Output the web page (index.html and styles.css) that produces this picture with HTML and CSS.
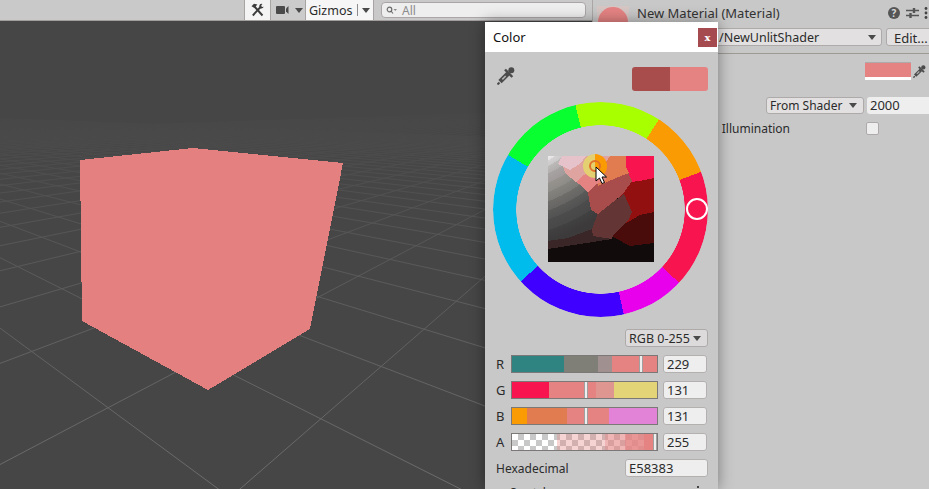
FILE: index.html
```html
<!DOCTYPE html>
<html lang="en">
<head>
    <meta charset="UTF-8">
    <meta name="viewport" content="width=device-width, initial-scale=1.0">
    <title>New Material - Color</title>
    <link rel="stylesheet" href="styles.css">
</head>
<body>
    <div class="editor">
        <!-- Scene view -->
        <section class="scene">
            <div class="toolbar">
                <button class="tool-btn tools-btn">
                    <svg width="13" height="14" viewBox="0 0 13 14">
                        <path d="M3 3 L11.500 12.500" stroke="#3c3c3c" stroke-width="1.900" fill="none"/>
                        <path d="M10 3.500 L1.800 12.500" stroke="#3c3c3c" stroke-width="1.900" fill="none"/>
                        <path d="M.5 3.200 L3 .8 L6.300 1.600 L3.600 5 Z" fill="#3c3c3c"/>
                        <path d="M9 1.200 A3 3 0 0 0 9 5.200 A3 3 0 0 0 12.800 3.800 L10.800 4 L10.200 2.600 L11.400 1 A3 3 0 0 0 9 1.200 Z" fill="#3c3c3c"/>
                    </svg>
                </button>
                <button class="tool-btn camera-btn">
                    <svg width="13" height="10" viewBox="0 0 13 10">
                        <rect x="0" y="1" width="9" height="8" rx="1" fill="#4a4a4a"/>
                        <path d="M10 3.500 L12.500 1 V9 L10 6.500 Z" fill="#4a4a4a"/>
                    </svg>
                    <span class="arrow"></span>
                </button>
                <button class="tool-btn gizmos-btn">
                    <span>Gizmos</span>
                    <span class="gizmos-sep"></span>
                    <span class="arrow"></span>
                </button>
                <div class="search">
                    <svg width="11" height="9" viewBox="0 0 11 9">
                        <circle cx="3.500" cy="3.500" r="2.300" stroke="#6a6a6a" stroke-width="1.200" fill="none"/>
                        <path d="M5 5 L7 7.500" stroke="#6a6a6a" stroke-width="1.200"/>
                        <path d="M7.500 3 H11 L9.250 5 Z" fill="#8a8a8a"/>
                    </svg>
                    <span>All</span>
                </div>
            </div>
            <svg id="sceneView" class="scene-canvas" viewBox="0 21 592 468">
                <defs>
                    <linearGradient id="gridFade" gradientUnits="userSpaceOnUse" x1="0" y1="104" x2="0" y2="489">
                        <stop offset="0" stop-color="#464646"/>
                        <stop offset="0.1" stop-color="#4a4a4a"/>
                        <stop offset="0.3" stop-color="#545454"/>
                        <stop offset="0.6" stop-color="#606060"/>
                        <stop offset="1" stop-color="#6c6c6c"/>
                    </linearGradient>
                </defs>
                <g id="gridLines" stroke="url(#gridFade)" stroke-width="1"></g>
                <polygon class="cube" points="80,160 193,148 343,163 310,329 208,390 82,321"/>
            </svg>
        </section>

        <!-- Inspector -->
        <section class="inspector">
            <div class="material-head">
                <div class="preview"><div class="preview-ball"></div></div>
                <span class="material-title">New Material (Material)</span>
                <div class="head-icons">
                    <span class="help-icon">?</span>
                    <svg width="13" height="12" viewBox="0 0 13 12">
                        <path d="M0 3.500 H13 M0 8.500 H13" stroke="#555" stroke-width="1.300"/>
                        <path d="M8 1 V6 M4.500 6 V11" stroke="#555" stroke-width="2.400"/>
                    </svg>
                    <svg width="4" height="12" viewBox="0 0 4 12">
                        <circle cx="2" cy="1.500" r="1.400" fill="#444"/>
                        <circle cx="2" cy="6" r="1.400" fill="#444"/>
                        <circle cx="2" cy="10.500" r="1.400" fill="#444"/>
                    </svg>
                </div>
            </div>
            <div class="shader-row">
                <div class="shader-select">
                    <span>/NewUnlitShader</span>
                    <span class="arrow"></span>
                </div>
                <button class="edit-btn">Edit...</button>
            </div>
            <div class="props">
                <div class="color-field">
                    <div class="color-field-swatch"></div>
                    <svg class="dropper-small" viewBox="0 0 18 18">
                        <use href="#dropper"/>
                    </svg>
                </div>
                <div class="queue-row">
                    <div class="queue-select">
                        <span>From Shader</span>
                        <span class="arrow"></span>
                    </div>
                    <div class="queue-input">2000</div>
                </div>
                <div class="gi-row">
                    <span class="gi-label">al Illumination</span>
                    <span class="checkbox"></span>
                </div>
            </div>
        </section>
    </div>

    <!-- Color picker window -->
    <aside class="color-picker">
        <header class="picker-head">
            <span>Color</span>
            <button class="close-btn">x</button>
        </header>
        <div class="picker-body">
            <div class="picker-top">
                <svg class="dropper" width="18" height="18" viewBox="0 0 18 18">
                    <g id="dropper">
                        <circle cx="14.300" cy="3.300" r="3" fill="#4b4b4b"/>
                        <path d="M8 2.500 L15.300 10" stroke="#4b4b4b" stroke-width="2.500"/>
                        <path d="M11 6.700 L3 14.700" stroke="#4b4b4b" stroke-width="4.600"/>
                        <path d="M8.700 9 L5.300 12.400" stroke="#b4b4b4" stroke-width="1.500"/>
                        <path d="M2.500 15.500 L.5 17.500" stroke="#4b4b4b" stroke-width="2"/>
                    </g>
                </svg>
                <div class="compare">
                    <div class="compare-old"></div>
                    <div class="compare-new"></div>
                </div>
            </div>

            <div class="wheel">
                <div class="wheel-ring"></div>
                <div class="wheel-handle"></div>
                <svg class="sv-square" width="106" height="106" viewBox="0 0 106 106" shape-rendering="crispEdges">
                    <defs>
                        <radialGradient id="grays" gradientUnits="userSpaceOnUse" cx="-46" cy="-79" r="170">
                            <stop offset="0.53" stop-color="#f2f0f0"/>
                            <stop offset="0.56" stop-color="#e4e2e2"/>
                            <stop offset="0.56" stop-color="#d4d2d2"/>
                            <stop offset="0.59" stop-color="#cac8c8"/>
                            <stop offset="0.59" stop-color="#bcb9b9"/>
                            <stop offset="0.63" stop-color="#b2aeae"/>
                            <stop offset="0.63" stop-color="#a8a3a3"/>
                            <stop offset="0.68" stop-color="#a09b9a"/>
                            <stop offset="0.68" stop-color="#96938f"/>
                            <stop offset="0.73" stop-color="#8e8c86"/>
                            <stop offset="0.73" stop-color="#85837e"/>
                            <stop offset="0.78" stop-color="#7c7a76"/>
                            <stop offset="0.78" stop-color="#6f6d6a"/>
                            <stop offset="0.83" stop-color="#666563"/>
                            <stop offset="0.83" stop-color="#5a5a59"/>
                            <stop offset="0.88" stop-color="#525252"/>
                            <stop offset="0.88" stop-color="#4c4c4c"/>
                            <stop offset="0.94" stop-color="#484848"/>
                            <stop offset="0.94" stop-color="#424141"/>
                            <stop offset="1" stop-color="#3c3a3a"/>
                        </radialGradient>
                    </defs>
                    <rect width="106" height="106" fill="#110b0c"/>
                    <polygon fill="#4a0b0b" points="106,54 92,57 78,62 62,78 67,82 82,90 106,87"/>
                    <polygon fill="#92100f" points="70,26 92,25 106,22 106,56 92,59 80,66 70,70"/>
                    <polygon fill="#f8144f" points="78,0 106,0 106,22 92,25 82,26 78,11"/>
                    <polygon fill="#3a2527" points="0,84 0,93 64,83 66,72 44,70 20,82"/>
                    <polygon fill="url(#grays)" points="0,0 40,0 54,26 40,37 43,54 50,57 44,73 20,82 0,85"/>
                    <polygon fill="#643535" points="44,73 50,57 76,38 84,56 80,65 65,79 64,83 45,80"/>
                    <polygon fill="#a94c4c" points="40,37 43,54 50,58 75,38 84,25 79,14 47,29"/>
                    <polygon fill="#e07c50" points="62,0 78,0 78,11 81,17 68,22 50,30 50,10"/>
                    <polygon fill="#dfa3a0" points="12,4 40,0 62,0 54,12 42,22 28,26 18,18"/>
                    <polygon fill="#e6c2ca" points="14,0 38,0 32,8 22,14 10,8"/>
                    <polygon fill="#e58383" points="28,26 44,12 56,16 58,24 47,29 40,37 34,30"/>
                </svg>
                <div class="sv-handle"></div>
                <div class="sv-handle-ring"></div>
                <svg class="cursor" width="13" height="19" viewBox="0 0 13 19">
                    <path d="M1 1 V15 L4.500 12 L7 17.500 L9.500 16.500 L7 11 L11.500 11 Z" fill="#fff" stroke="#000" stroke-width="1"/>
                </svg>
            </div>

            <div class="mode-row">
                <div class="mode-select">
                    <span>RGB 0-255</span>
                    <span class="arrow"></span>
                </div>
            </div>

            <div class="channel">
                <label>R</label>
                <div class="track track-r"><span class="thumb" style="left: 127px"></span></div>
                <div class="num-input">229</div>
            </div>
            <div class="channel">
                <label>G</label>
                <div class="track track-g"><span class="thumb" style="left: 72px"></span></div>
                <div class="num-input">131</div>
            </div>
            <div class="channel">
                <label>B</label>
                <div class="track track-b"><span class="thumb" style="left: 72px"></span></div>
                <div class="num-input">131</div>
            </div>
            <div class="channel">
                <label>A</label>
                <div class="track track-a"><span class="thumb" style="left: 141px"></span></div>
                <div class="num-input">255</div>
            </div>

            <div class="hex-row">
                <label>Hexadecimal</label>
                <div class="hex-input">E58383</div>
            </div>
            <div class="swatches-row">
                <span>Swatches</span>
                <span class="swatches-menu"></span>
            </div>
        </div>
    </aside>

    <script src="grid.js"></script>
</body>
</html>
```

FILE: styles.css
```css
* {
    box-sizing: border-box;
}
html, body {
    margin: 0;
    height: 100%;
    overflow: hidden;
}
body {
    font-family: "Noto Sans", "Open Sans", Arial, sans-serif;
    font-size: 12px;
    color: #2b2b2b;
    background-color: #c8c8c8;
}
button {
    font: inherit;
    color: inherit;
    margin: 0;
    padding: 0;
    border: none;
}
.editor {
    display: flex;
    height: 489px;
}
.arrow {
    display: inline-block;
    flex: none;
    width: 0;
    height: 0;
    border-left: 4px solid transparent;
    border-right: 4px solid transparent;
    border-top: 5px solid #4a4a4a;
}

/* Scene view */
.scene {
    flex: 0 0 592px;
    display: flex;
    flex-direction: column;
}
.toolbar {
    flex: 0 0 21px;
    display: flex;
    align-items: stretch;
    padding-left: 244px;
    background: #c9c9c9;
    border-bottom: 1px solid #a39d9d;
}
.tool-btn {
    display: flex;
    align-items: center;
    font-size: 12.500px;
    border-left: 1px solid #a8a4a4;
}
.tools-btn {
    width: 26px;
    justify-content: center;
    background: #f4f4f4;
}
.camera-btn {
    width: 35px;
    gap: 6px;
    padding-left: 5px;
    background: #cbcbcb;
}
.gizmos-btn {
    width: 69px;
    padding-left: 3px;
    background: #f6f6f6;
    border-right: 1px solid #a8a4a4;
}
.gizmos-sep {
    width: 1px;
    height: 12px;
    margin: 0 4px 0 5px;
    background: #8c8c8c;
}
.search {
    width: 205px;
    height: 16px;
    margin: 2px 0 0 7px;
    padding-left: 4px;
    display: flex;
    align-items: center;
    gap: 5px;
    color: #8c8c8c;
    background: #eeeeee;
    border: 1px solid #aaa6a6;
    border-radius: 4px;
}
.scene-canvas {
    display: block;
    flex: 1;
    width: 592px;
    background: #464646;
}
.cube {
    fill: #e48180;
    shape-rendering: crispEdges;
}

/* Inspector */
.inspector {
    flex: 1;
    min-width: 0;
    overflow: hidden;
    background: #c8c8c8;
    border-left: 1px solid #aaa6a6;
    padding-left: 4px;
}
.material-head {
    height: 28px;
    display: flex;
    align-items: flex-start;
    padding-top: 5px;
}
.preview {
    width: 32px;
    height: 19px;
    margin-top: 1px;
    overflow: hidden;
    background: #d6c6c4;
}
.preview-ball {
    width: 30px;
    height: 30px;
    margin: 1px auto 0;
    border-radius: 50%;
    background: #e58383;
}
.material-title {
    margin-left: 8px;
    font-size: 13px;
    line-height: 17px;
    color: #333333;
}
.head-icons {
    margin-left: auto;
    width: 41px;
    padding-top: 2px;
    display: flex;
    align-items: center;
    justify-content: space-between;
    padding-right: 1px;
}
.help-icon {
    width: 12px;
    height: 12px;
    border-radius: 50%;
    background: #555;
    color: #d8d8d8;
    font-size: 10px;
    font-weight: 700;
    line-height: 12px;
    text-align: center;
}
.shader-row {
    display: flex;
    gap: 4px;
    height: 18px;
    margin-left: -10px;
}
.shader-select {
    flex: 1;
    display: flex;
    align-items: center;
    justify-content: space-between;
    padding: 0 5px 0 131px;
    font-size: 12.500px;
    white-space: nowrap;
    background: #e2e0e0;
    border: 1px solid #aeaaaa;
    border-radius: 3px;
}
.edit-btn {
    width: 48px;
    margin-right: -5px;
    font-size: 13px;
    text-align: left;
    padding-left: 7px;
    background: #e2e0e0;
    border: 1px solid #aeaaaa;
    border-radius: 3px;
}
.props {
    margin-top: 7px;
    padding-top: 8px;
    border-top: 1px solid #9d9a94;
}
.color-field {
    display: flex;
    align-items: center;
    height: 18px;
    margin-left: 268px;
}
.color-field-swatch {
    width: 46px;
    height: 18px;
    background: #e58383;
    border-bottom: 3px solid #ffffff;
    border-top: 1px solid #aeaaaa;
}
.dropper-small {
    width: 13px;
    height: 13px;
    margin-left: 2px;
}
.queue-row {
    display: flex;
    gap: 3px;
    margin: 17px 0 0 169px;
    height: 17px;
}
.queue-select {
    flex: none;
    width: 98px;
    display: flex;
    align-items: center;
    justify-content: space-between;
    padding: 0 6px 0 3px;
    font-size: 12px;
    white-space: nowrap;
    background: #e2e0e0;
    border: 1px solid #aeaaaa;
    border-radius: 3px;
}
.queue-input {
    width: 70px;
    flex: none;
    padding-left: 3px;
    font-size: 13px;
    line-height: 17px;
    background: #eeeeee;
    border-radius: 3px;
}
.gi-row {
    display: flex;
    align-items: center;
    justify-content: flex-end;
    width: 282px;
    height: 14px;
    margin-top: 7px;
}
.gi-label {
    font-size: 12px;
    white-space: nowrap;
    margin-right: 76px;
}
.checkbox {
    flex: none;
    width: 13px;
    height: 13px;
    background: #eeeeee;
    border: 1px solid #aeaaaa;
    border-radius: 2px;
}

/* Color picker */
.color-picker {
    position: absolute;
    left: 485px;
    top: 22px;
    width: 233px;
    height: 467px;
    overflow: hidden;
    background: #c8c8c8;
    box-shadow: 0 0 14px rgba(0, 0, 0, 0.4);
    clip-path: inset(-20px -20px 0 -20px);
}
.picker-head {
    height: 30px;
    display: flex;
    align-items: center;
    justify-content: space-between;
    padding: 0 1px 0 8px;
    font-size: 13px;
    color: #111111;
    background: #ffffff;
}
.close-btn {
    width: 19px;
    height: 19px;
    font-family: "DejaVu Serif", serif;
    font-size: 10px;
    font-weight: 700;
    color: #ffffff;
    background: #a54a4f;
}
.picker-body {
    padding: 0 10px 0 11px;
}
.picker-top {
    height: 39px;
    display: flex;
    align-items: flex-end;
    justify-content: space-between;
}
.dropper {
    margin: 0 0 6px 1px;
}
.compare {
    width: 76px;
    height: 24px;
    display: flex;
    overflow: hidden;
    border-radius: 3px;
}
.compare-old {
    flex: 1;
    background: #a94c4c;
}
.compare-new {
    flex: 1;
    background: #e58383;
}

.wheel {
    position: relative;
    width: 215px;
    height: 215px;
    margin: 11px 0 0 -3px;
}
.wheel-ring {
    width: 215px;
    height: 215px;
    border-radius: 50%;
    background: conic-gradient(
        #a8ff00 0deg 33deg,
        #fb9b03 33deg 69.500deg,
        #f8144f 69.500deg 133deg,
        #e800ec 133deg 167.500deg,
        #4000ff 167.500deg 228deg,
        #00bcec 228deg 300.500deg,
        #08ff30 300.500deg 346.500deg,
        #a8ff00 346.500deg 360deg
    );
    -webkit-mask: radial-gradient(closest-side, transparent 84px, #000 84.500px);
    mask: radial-gradient(closest-side, transparent 84px, #000 84.500px);
}
.wheel-handle {
    position: absolute;
    left: 193px;
    top: 96px;
    width: 22px;
    height: 22px;
    border: 2px solid #ffffff;
    border-radius: 50%;
}
.sv-square {
    position: absolute;
    left: 55px;
    top: 54px;
}
.sv-handle {
    position: absolute;
    left: 90px;
    top: 52px;
    width: 24px;
    height: 24px;
    border-radius: 50%;
    background: conic-gradient(#fb9b03 0deg 140deg, #e4d070 140deg 360deg);
}
.sv-handle-ring {
    position: absolute;
    left: 96px;
    top: 58px;
    width: 12px;
    height: 12px;
    border: 2px solid #e0702a;
    border-radius: 50%;
}
.cursor {
    position: absolute;
    left: 102px;
    top: 64px;
}

.mode-row {
    display: flex;
    justify-content: flex-end;
    margin-top: 12px;
}
.mode-select {
    width: 83px;
    height: 18px;
    display: flex;
    align-items: center;
    gap: 3px;
    padding: 0 3px;
    font-size: 12.500px;
    background: #dcdada;
    border: 1px solid #aeaaaa;
    border-radius: 3px;
}
.channel {
    display: flex;
    align-items: center;
    height: 18px;
    margin-top: 8px;
    font-size: 13px;
}
.channel label {
    flex: 0 0 15px;
}
.track {
    position: relative;
    flex: 0 0 147px;
    height: 18px;
    border: 1px solid #7c7878;
}
.track-r {
    background: linear-gradient(90deg, #2f8380 0 52px, #7f7f77 52px 86px, #a09090 86px 100px, #e58383 100px);
}
.track-g {
    background: linear-gradient(90deg, #f8144f 0 37px, #e58383 37px 84px, #df9690 84px 102px, #e4d478 102px);
}
.track-b {
    background: linear-gradient(90deg, #fb9b03 0 15px, #e07c50 15px 55px, #e58383 55px 97px, #e283d8 97px);
}
.track-a {
    background:
        linear-gradient(90deg, transparent 0 45px, rgba(229, 131, 131, 0.35) 45px 93px, rgba(229, 131, 131, 0.6) 93px 113px, rgba(229, 131, 131, 0.85) 113px 132px, #e58383 132px),
        repeating-conic-gradient(#c8c8c8 0 25%, #ffffff 0 50%) 0 0 / 12px 12px;
}
.thumb {
    position: absolute;
    top: 0;
    bottom: 0;
    width: 4px;
    background: #eeeeee;
    border-left: 1px solid #a0a0a0;
    border-right: 1px solid #a0a0a0;
}
.num-input {
    flex: 0 0 44px;
    height: 18px;
    margin-left: 5px;
    padding-left: 3px;
    font-size: 13px;
    line-height: 16px;
    background: #eeeeee;
    border: 1px solid #b4b0b0;
    border-radius: 3px;
}
.hex-row {
    display: flex;
    align-items: center;
    justify-content: space-between;
    height: 18px;
    margin-top: 8px;
    font-size: 12px;
}
.hex-input {
    width: 83px;
    height: 18px;
    padding-left: 3px;
    font-size: 13px;
    line-height: 16px;
    background: #eeeeee;
    border: 1px solid #b4b0b0;
    border-radius: 3px;
}
.swatches-row {
    display: flex;
    justify-content: space-between;
    margin-top: 8px;
    padding-left: 14px;
    line-height: 16px;
}
.swatches-menu {
    width: 2px;
    height: 2px;
    margin: 1px 9px 0 0;
    background: #444444;
}
```

FILE: grid.js
```js
// Lineas del suelo de la escena: dos familias que se van a dos puntos de fuga
const gridLines = document.getElementById("gridLines");
const horizon = 107;

function addFamily(vanishX, direction, firstStep, stepSize, count) {
    for (let k = -1; k < count; k++) {
        const inverseSlope = firstStep + stepSize * k;
        const line = document.createElementNS("http://www.w3.org/2000/svg", "line");
        line.setAttribute("x1", vanishX + direction * inverseSlope * 3);
        line.setAttribute("y1", horizon + 3);
        line.setAttribute("x2", vanishX + direction * inverseSlope * 400);
        line.setAttribute("y2", horizon + 400);
        gridLines.appendChild(line);
    }
}

addFamily(-300, 1, 1.357, 0.634, 40);
addFamily(680, -1, 1.152, 0.75, 40);
```
